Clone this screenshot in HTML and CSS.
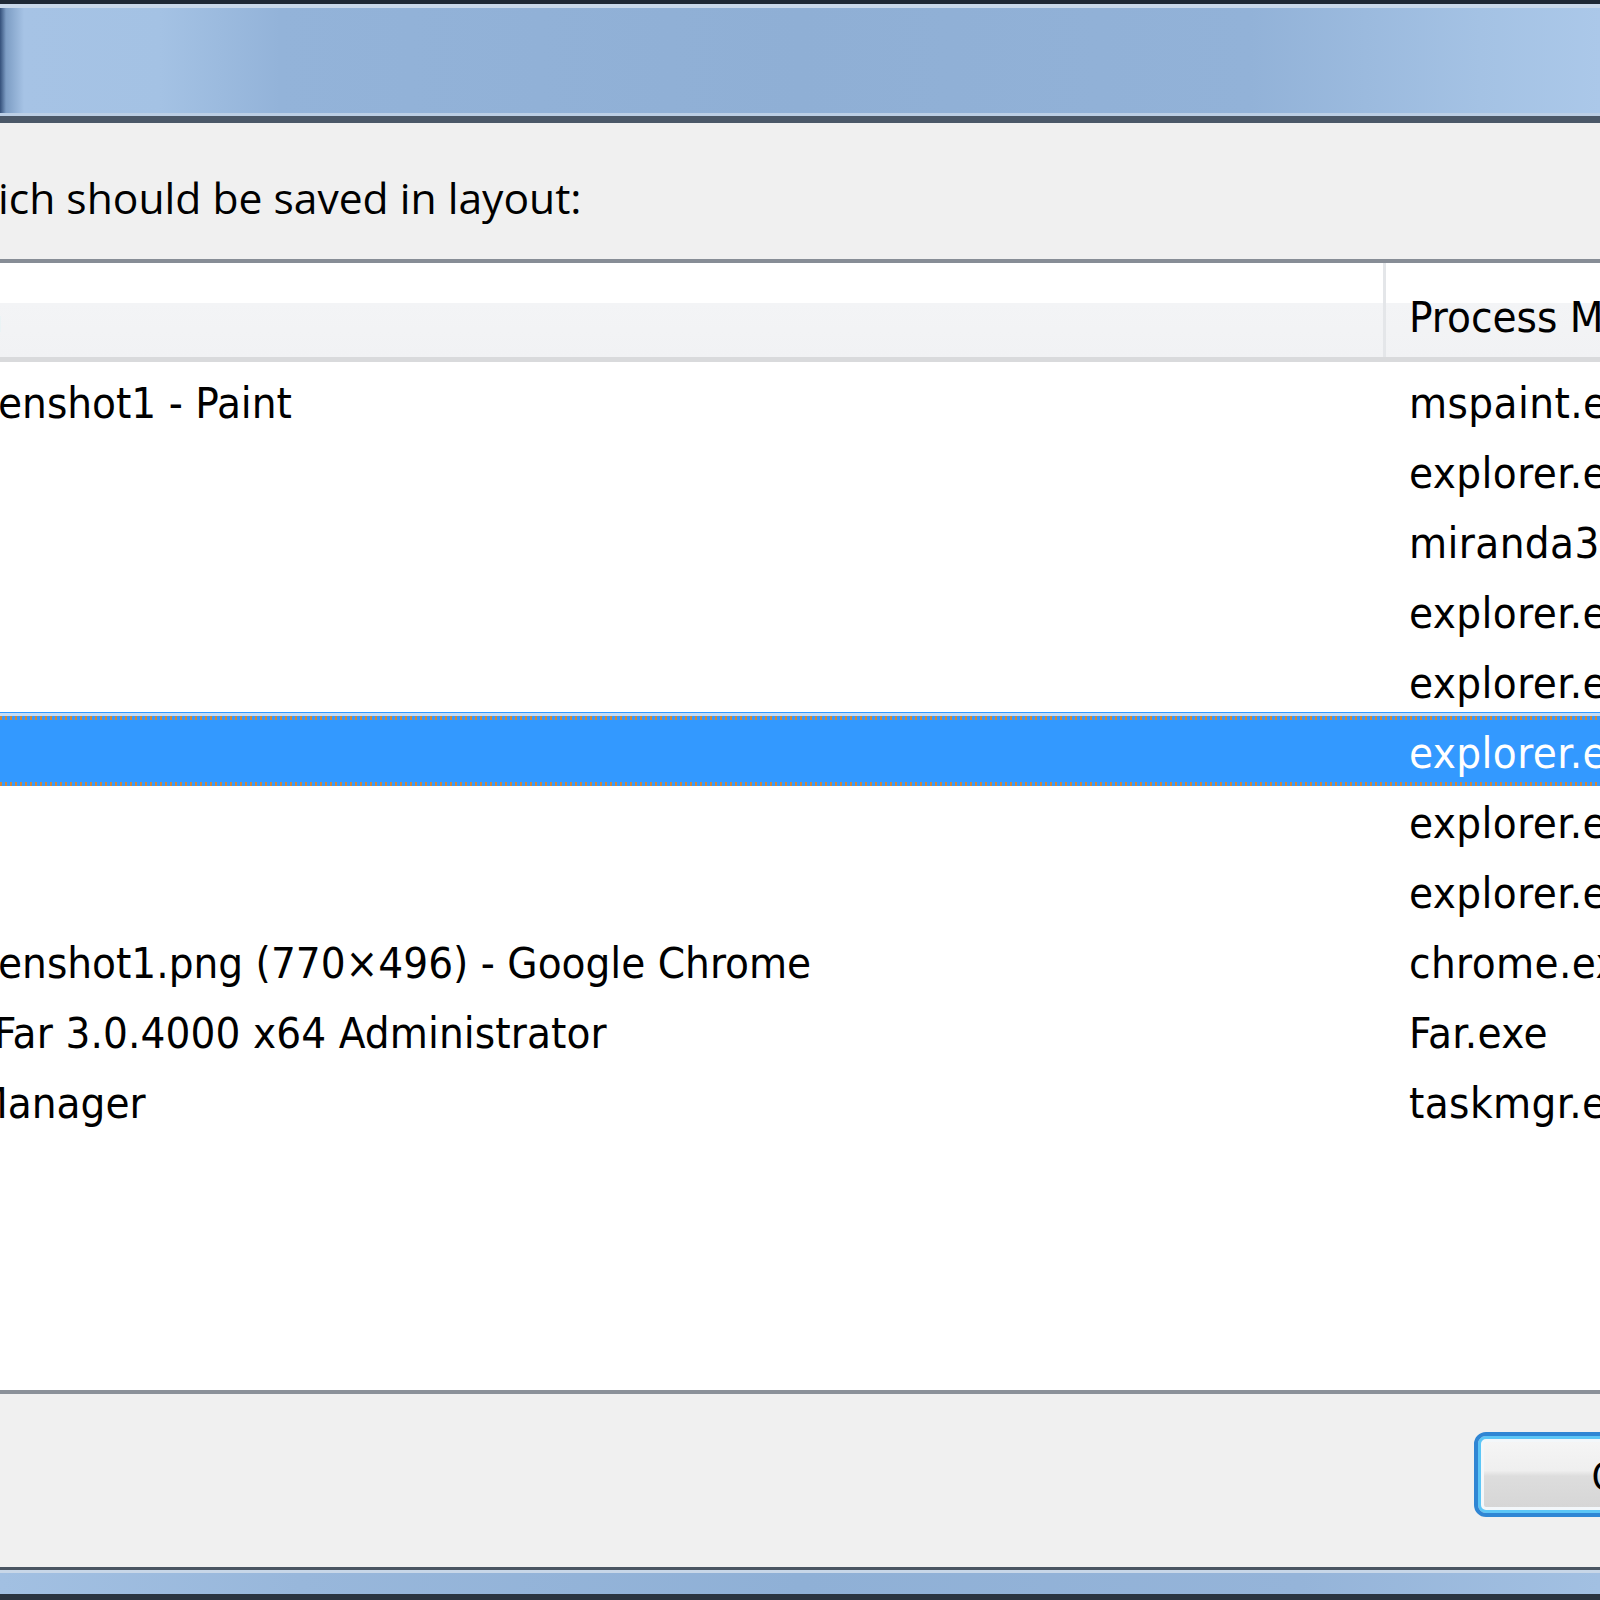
FILE: index.html
```html
<!DOCTYPE html>
<html>
<head>
<meta charset="utf-8">
<link rel="stylesheet" href="styles.css">
</head>
<body>
<div class="screen">
  <div class="titlebar"></div>
  <div class="dialog">
    <div class="prompt">ich should be saved in layout:</div>
    <div class="listview">
      <div class="lv-header">
        <div class="hcell hcell-caption"><span class="cut-n">n</span></div>
        <div class="hcell hcell-process">Process Module</div>
      </div>
      <div class="lv-body">
        <div class="row"><div class="cell c1"><span class="cut-e">enshot1 - Paint</span></div><div class="cell c2">mspaint.exe</div></div>
        <div class="row"><div class="cell c1"></div><div class="cell c2">explorer.exe</div></div>
        <div class="row"><div class="cell c1"></div><div class="cell c2">miranda32.exe</div></div>
        <div class="row"><div class="cell c1"></div><div class="cell c2">explorer.exe</div></div>
        <div class="row"><div class="cell c1"></div><div class="cell c2">explorer.exe</div></div>
        <div class="row selected"><div class="cell c1"></div><div class="cell c2">explorer.exe</div></div>
        <div class="row"><div class="cell c1"></div><div class="cell c2">explorer.exe</div></div>
        <div class="row"><div class="cell c1"></div><div class="cell c2">explorer.exe</div></div>
        <div class="row"><div class="cell c1"><span class="cut-e">enshot1.png (770×496) - Google Chrome</span></div><div class="cell c2">chrome.exe</div></div>
        <div class="row"><div class="cell c1"><span class="cut-f">Far 3.0.4000 x64 Administrator</span></div><div class="cell c2">Far.exe</div></div>
        <div class="row"><div class="cell c1"><span class="cut-m">Manager</span></div><div class="cell c2">taskmgr.exe</div></div>
      </div>
    </div>
    <div class="footer">
      <button class="btn">OK</button>
    </div>
  </div>
  <div class="framebottom"></div>
</div>
</body>
</html>
```

FILE: styles.css
```css
html, body {
  margin: 0;
  padding: 0;
  background: #f0f0f0;
}

body {
  width: 1600px;
  height: 1600px;
  overflow: hidden;
}

.screen {
  width: 1600px;
  height: 1600px;
  display: flex;
  flex-direction: column;
  overflow: hidden;
}

.titlebar {
  flex: 0 0 123px;
  box-sizing: border-box;
  border-top: 4px solid #1e2835;
  border-bottom: 7px solid #4b5868;
  background: linear-gradient(90deg, #34507a 0, #7d9dc4 6px, #a6c3e5 24px, #a4c2e4 160px, #93b3d9 280px, #8fafd5 800px, #92b2d8 1250px, #a4c2e4 1480px, #abc8e9 1600px);
  box-shadow: inset 0 4px 0 #c9d8ea, inset 0 -3px 0 #bccfe5;
}

.dialog {
  flex: 0 0 auto;
  background: #f0f0f0;
  display: flex;
  flex-direction: column;
}

.prompt {
  height: 135px;
  box-sizing: border-box;
  padding-top: 46px;
  line-height: 56px;
  font-family: "Open Sans", "Noto Sans", sans-serif;
  font-size: 42.6px;
  color: #000;
  white-space: nowrap;
  overflow: hidden;
  margin-left: -2px;
}

.listview {
  margin-top: 1px;
  background: #fff;
  border-top: 4px solid #878d96;
  border-bottom: 4px solid #8b9199;
  font-family: "DejaVu Sans Condensed", "DejaVu Sans", sans-serif;
  font-size: 43.5px;
  color: #000;
}

.lv-header {
  display: grid;
  grid-template-columns: 1386px 1fr;
  height: 94px;
  border-bottom: 5px solid #d9dadc;
  background: linear-gradient(#ffffff 0, #ffffff 40px, #f3f4f6 40px, #f1f2f4 94px);
}

.hcell {
  box-sizing: border-box;
  padding-top: 14px;
  line-height: 80px;
  white-space: nowrap;
  overflow: hidden;
}

.hcell-caption {
  border-right: 3px solid #e4e6e9;
}

.hcell-process {
  padding-left: 23px;
  color: #000;
}

.cut-n {
  display: inline-block;
  margin-left: -22px;
}

.lv-body {
  height: 1028px;
}

.row {
  display: grid;
  grid-template-columns: 1383px 1fr;
  height: 70px;
}

.cell {
  box-sizing: border-box;
  padding-top: 12px;
  line-height: 58px;
  white-space: nowrap;
  overflow: hidden;
}

.c2 {
  padding-left: 26px;
  letter-spacing: 0.4px;
}

.cut-e {
  display: inline-block;
  margin-left: -2px;
}

.cut-f {
  display: inline-block;
  margin-left: -6px;
  letter-spacing: 0.1px;
}

.cut-m {
  display: inline-block;
  margin-left: -26px;
}

.row.selected {
  color: #fff;
  background:
    repeating-linear-gradient(90deg, #d0873a 0 2.5px, #3399ff 2.5px 5px) left 0 top 4px / 100% 4px no-repeat,
    repeating-linear-gradient(90deg, #d0873a 0 2.5px, #3399ff 2.5px 5px) left 0 bottom 0 / 100% 4px no-repeat,
    linear-gradient(#c3ddf7, #c3ddf7) left 0 top 1px / 100% 3px no-repeat,
    #3399ff;
  height: 74px;
  margin-bottom: -4px;
  position: relative;
}

.footer {
  height: 173px;
  box-sizing: border-box;
  padding: 38px 0 0 1474px;
  display: flex;
  align-items: flex-start;
  background: #f0f0f0;
}

.btn {
  flex: 0 0 320px;
  height: 85px;
  box-sizing: border-box;
  border: 4px solid #2f86d4;
  border-radius: 12px;
  box-shadow: inset 0 0 0 3px #5cc6f6, inset 0 0 0 6px #f3f7fa;
  background: linear-gradient(#f6f6f6 0, #efefef 45%, #dddddd 52%, #d5d5d5 100%);
  font-family: "Open Sans", "Noto Sans", sans-serif;
  font-size: 42px;
  color: #000;
  text-align: left;
  padding: 0 0 0 113px;
  line-height: 77px;
}

.framebottom {
  flex: 1 0 auto;
  box-sizing: border-box;
  border-top: 3px solid #4a5562;
  border-bottom: 6px solid #2a3440;
  background: linear-gradient(90deg, #a2c0e2 0, #98b7db 300px, #8fb0d6 800px, #95b4d9 1300px, #a2c0e2 1600px);
  box-shadow: inset 0 3px 0 #c8d7e8;
}
```
